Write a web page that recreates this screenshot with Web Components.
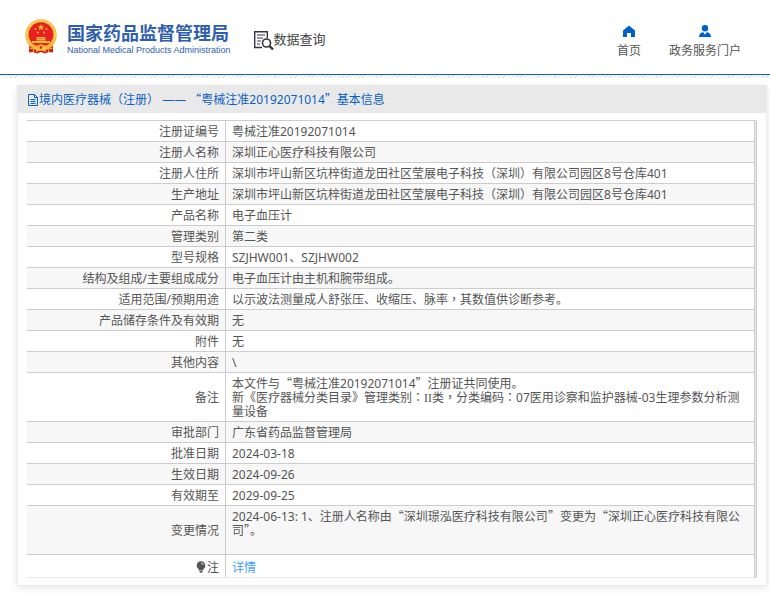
<!DOCTYPE html>
<html lang="zh-CN">
<head>
<meta charset="utf-8">
<title>国家药品监督管理局 数据查询</title>
<style>
body { margin: 0; background: #fff; color: #555; font: 12px/14px "Noto Sans", "Noto Sans CJK SC", sans-serif; }
</style>
</head>
<body>
<nmpa-page></nmpa-page>
<script>
const RESET = `*{box-sizing:border-box} a{color:inherit;text-decoration:none} svg{display:block}
.q,.p{line-height:0} .q{font-family:"Noto Sans CJK SC",sans-serif} .p{font-family:"Noto Sans CJK TC",sans-serif}`;
/* Full-width quotes and centred punctuation come from the CJK families. */
const cjk = s => s.replace(/[“”]/g, '<span class="q" lang="zh-CN">$&</span>')
                  .replace(/[，：（）]/g, '<span class="p" lang="zh-TW">$&</span>');
function define(name, css, html) {
  customElements.define(name, class extends HTMLElement {
    constructor() {
      super();
      this.attachShadow({ mode: 'open' }).innerHTML = `<style>${RESET}${css}</style>${html}`;
    }
  });
}

define('nmpa-emblem', ':host{display:block;width:32px;height:36px}', `
<svg width="32" height="36" viewBox="0 0 32 36" aria-hidden="true">
<path d="M4 24V33.500L8 33l4 1.500 4-1.500 4 1.500 4-1.500 4 .5V24z" fill="#dc1c1c"/>
<circle cx="16" cy="16" r="15.700" fill="#f3b436"/>
<circle cx="16" cy="16" r="14" fill="none" stroke="#f9d05c" stroke-width="2" stroke-dasharray="3 1"/>
<circle cx="16" cy="15.500" r="12.300" fill="#e9201f"/>
<path d="M16 5l.9 2.200 2.400.1-1.900 1.500.7 2.400-2.100-1.400-2.100 1.400.7-2.400-1.900-1.500 2.400-.1z" fill="#f6c53c"/>
<g fill="#f6c040"><circle cx="10.500" cy="10" r="1"/><circle cx="21.500" cy="10" r="1"/><circle cx="13" cy="13.500" r="1"/><circle cx="19" cy="13.500" r="1"/>
<path d="M12 18h8l1 1.500H11zM11.500 20h9v1.500h-9zM7 22h18v2H7z"/></g>
<path d="M4 24q6 5 12 1q6 4 12-1v3q-6 4-12 1q-6 3-12-1z" fill="#f3b436"/>
<path d="M4 29l5 1-1 3M28 29l-5 1 1 3" fill="none" stroke="#f3b436"/>
<path d="M12 28h8l1 5-5-2-5 2z" fill="#f6c040"/><circle cx="16" cy="28.500" r="1.200" fill="#dc1c1c"/>
</svg>`);

define('nmpa-brand', `:host{display:block;color:#2f5eae}
a{display:flex;gap:10px}
.t{display:grid;align-content:start;white-space:nowrap}
b{font:700 18px/24px "Noto Sans CJK SC",sans-serif;padding-top:1px}
small{font:9px/12px "Liberation Sans",sans-serif}`, `
<a href="#"><nmpa-emblem></nmpa-emblem><span class="t"><b>国家药品监督管理局</b><small>National Medical Products Administration</small></span></a>`);

define('nmpa-query', `:host{display:block;color:#444}
a{display:flex;align-items:center;font:13px/20px "Noto Sans CJK SC",sans-serif;white-space:nowrap}
span{padding-bottom:4px}`, `
<a href="#"><svg width="20" height="20" viewBox="0 0 20 20" fill="none" stroke="#34343f" aria-hidden="true">
<path d="M8 16.500H.7V.7h12.600V7" stroke-width="1.400"/><path d="M3 4h8M3 7h6M3 10h4M3 13h3"/>
<circle cx="12.500" cy="12" r="4" stroke-width="1.600"/><path d="M15.500 15l3.500 3.500" stroke-width="2.400"/></svg><span>数据查询</span></a>`);

define('nmpa-navlink', `:host{display:block}
a{display:grid;justify-items:center;gap:6px;line-height:16px;color:#555}
::slotted(svg){display:block}`, `<a href="#"><slot name="icon"></slot><slot></slot></a>`);

define('nmpa-header', `:host{display:block}
header{display:flex;align-items:flex-start;height:74px;padding:19px 29px 0 25px}
nmpa-query{margin:10px 0 0 23px}
nav{display:flex;gap:28px;margin:6px 0 0 auto}
.rule{height:4px;border-top:1px solid #0363be;background:repeating-linear-gradient(135deg,#e3e3e3 0 1px,#fff 1px 3px)}`, `
<header><nmpa-brand></nmpa-brand><nmpa-query></nmpa-query>
<nav>
<nmpa-navlink><svg slot="icon" width="12" height="12" viewBox="0 0 12 12" fill="#0062c9"><path d="M6 .5L0 5.500V12h4V8h4v4h4V5.500z"/></svg>首页</nmpa-navlink>
<nmpa-navlink><svg slot="icon" width="12" height="12" viewBox="0 0 12 12" fill="#0062c9"><circle cx="6" cy="3.200" r="3.200"/><path d="M0 12q0-4 4-5l2 2.500L8 7q4 1 4 5z"/></svg>政务服务门户</nmpa-navlink>
</nav></header><div class="rule"></div>`);

define('nmpa-panel', `:host{display:block;margin:7px 3px 0 17px;border:1px solid #e9e9f0;box-shadow:0 2px 8px rgba(0,0,0,.1);background:#fff}
h1{display:flex;align-items:center;margin:-1px -1px 0;height:28px;padding:2px 10px 0;background:#e9e9e9;color:#0b62c2;font:12px/16px "Noto Sans","Noto Sans CJK SC",sans-serif;white-space:pre}
.body{padding:7px 9px}`, `
<h1><svg width="12" height="12" viewBox="0 0 12 12" fill="none" stroke="#0b62c2" aria-hidden="true"><path d="M1.500.5h6l3 3v8h-9zM7.500.5v3h3M3.500 5.500h5M3.500 7.500h5M3.500 9.500h5"/></svg><span>${cjk('境内医疗器械（注册） —— “粤械注准20192071014”基本信息')}</span></h1>
<div class="body"><slot></slot></div>`);

const address = '深圳市坪山新区坑梓街道龙田社区莹展电子科技（深圳）有限公司园区8号仓库401';
const rows = [
  ['注册证编号', '粤械注准20192071014'],
  ['注册人名称', '深圳正心医疗科技有限公司'],
  ['注册人住所', address],
  ['生产地址', address],
  ['产品名称', '电子血压计'],
  ['管理类别', '第二类'],
  ['型号规格', 'SZJHW001、SZJHW002'],
  ['结构及组成/主要组成成分', '电子血压计由主机和腕带组成。'],
  ['适用范围/预期用途', '以示波法测量成人舒张压、收缩压、脉率，其数值供诊断参考。'],
  ['产品储存条件及有效期', '无'],
  ['附件', '无'],
  ['其他内容', '\\'],
  ['备注', '本文件与“粤械注准20192071014”注册证共同使用。<br>新《医疗器械分类目录》管理类别：<span class="s">II</span>类，分类编码：07医用诊察和监护器械-03生理参数分析测量设备'],
  ['审批部门', '广东省药品监督管理局'],
  ['批准日期', '2024-03-18'],
  ['生效日期', '2024-09-26'],
  ['有效期至', '2029-09-25'],
  ['变更情况', '2024-06-13: 1、注册人名称由“深圳璟泓医疗科技有限公司”变更为“深圳正心医疗科技有限公司”。<br><br>']
];
const bulb = '<svg width="10" height="12" viewBox="0 0 10 12" aria-hidden="true"><path d="M5 .3a4.200 4.200 0 0 0-2.500 7.600L3 9.500h4l.5-1.600A4.200 4.200 0 0 0 5 .3zM3.500 10h3v1l-1 .8h-1l-1-.8z" fill="#555"/><path d="M5 2q2 0 2.500 2" fill="none" stroke="#ddd"/></svg>';
define('nmpa-record', `:host{display:block;border-right:1px solid #ccc;padding-right:1px;background:#e9e9ee}
table{width:100%;border-collapse:separate;border-spacing:0;border-top:1px solid #ccc;border-right:1px solid #ccc;background:#fff;table-layout:fixed}
col.k{width:199px}
th,td{padding:4px 6px 2px;border-bottom:1px solid #ccc;font-weight:400;line-height:14px;vertical-align:middle}
th{text-align:right;border-right:1px solid #ccc;white-space:nowrap}
td{text-align:left;overflow-wrap:anywhere}
tr:nth-child(even){background:#f7f7f7}
tr:last-child>*{padding:6px 6px 2px;border-bottom-color:#e9e9ee}
tr:last-child th svg{display:inline-block;vertical-align:-1px;margin-right:1px}
td a{color:#409eff}
.s{font-family:"Liberation Serif",serif;line-height:0}`, `
<table><colgroup><col class="k"><col></colgroup><tbody>
${rows.map(([k, v]) => `<tr><th scope="row">${k}</th><td>${cjk(v)}</td></tr>`).join('')}
<tr><th scope="row">${bulb}注</th><td><a href="#">详情</a></td></tr>
</tbody></table>`);

define('nmpa-page', ':host{display:block;padding-bottom:10px}', `
<nmpa-header></nmpa-header><main><nmpa-panel><nmpa-record></nmpa-record></nmpa-panel></main>`);
</script>
</body>
</html>
